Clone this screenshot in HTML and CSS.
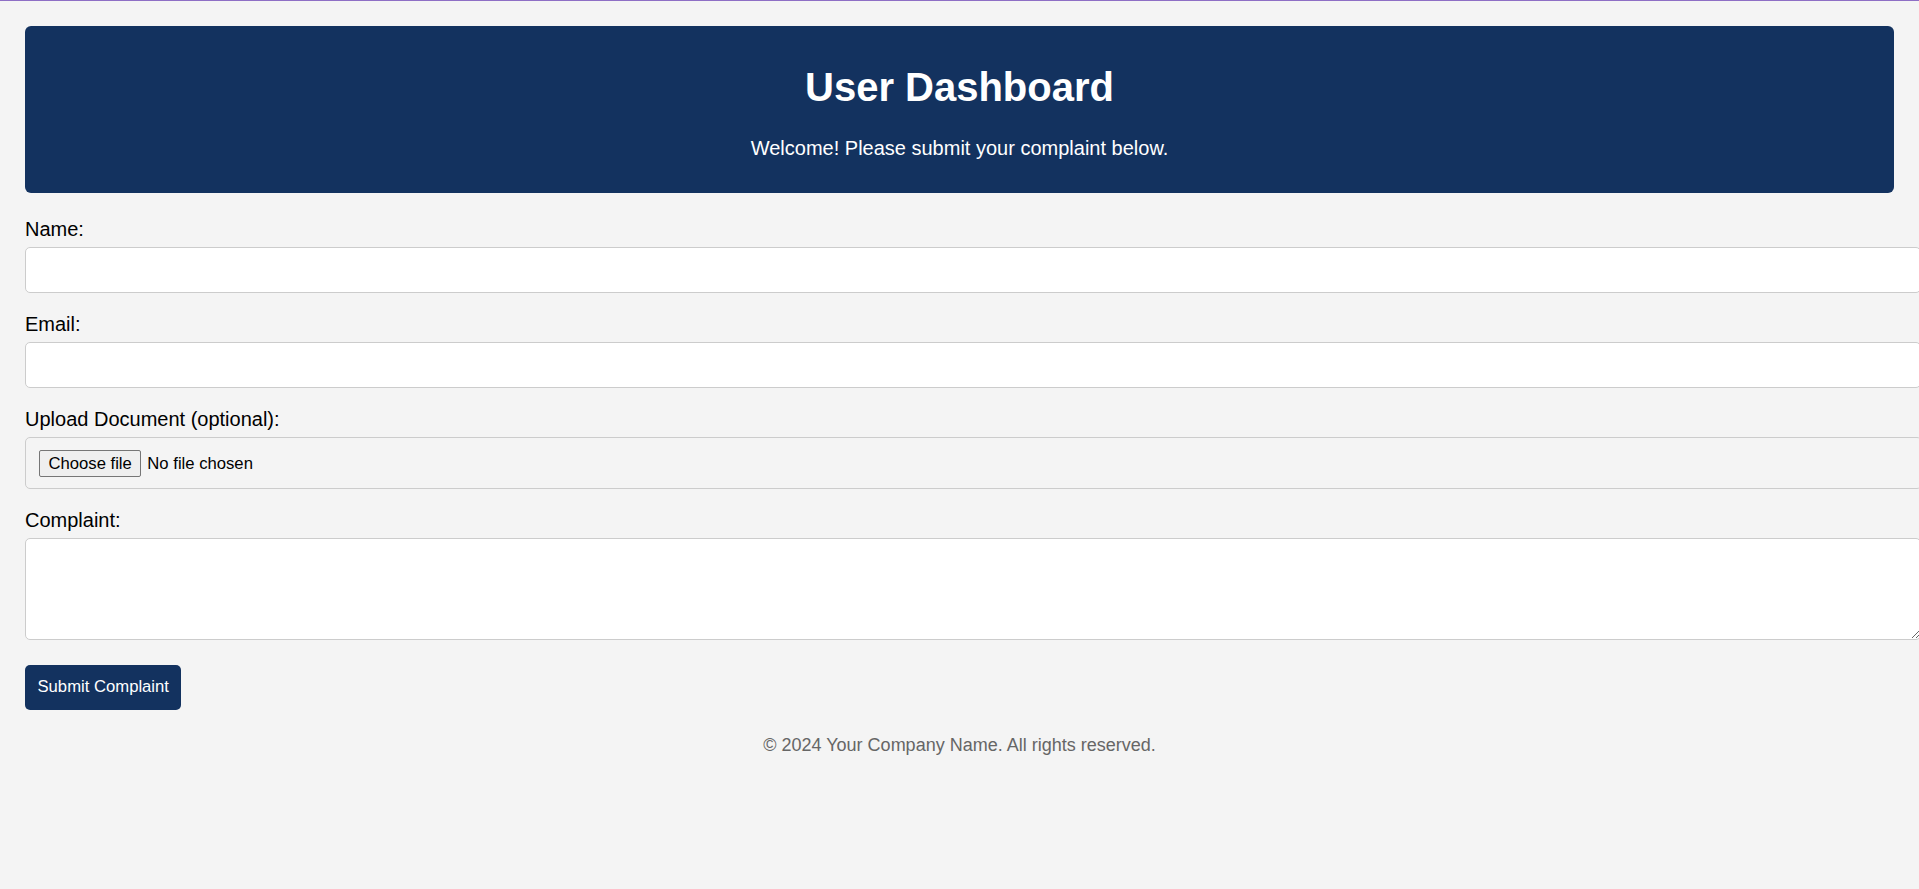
FILE: index.html
```html
<!DOCTYPE html>
<html lang="en">
<head>
<meta charset="UTF-8">
<title>User Dashboard</title>
<link rel="stylesheet" href="styles.css">
</head>
<body>
<header class="banner">
  <h1 class="banner-title">User Dashboard</h1>
  <p class="banner-text">Welcome! Please submit your complaint below.</p>
</header>
<form class="complaint-form">
  <label class="field-label" for="name">Name:</label>
  <input class="field-input" type="text" id="name" name="name">
  <label class="field-label" for="email">Email:</label>
  <input class="field-input" type="email" id="email" name="email">
  <label class="field-label" for="doc">Upload Document (optional):</label>
  <div class="field-input field-file">
    <label class="file-btn" for="doc">Choose file</label>
    <span class="file-status">No file chosen</span>
    <input class="file-hidden" type="file" id="doc" name="doc">
  </div>
  <label class="field-label" for="complaint">Complaint:</label>
  <textarea class="field-input field-area" id="complaint" name="complaint"></textarea>
  <button class="submit-btn" type="submit">Submit Complaint</button>
</form>
<footer class="page-footer">© 2024 Your Company Name. All rights reserved.</footer>
</body>
</html>
```
FILE: styles.css
```css
html {
  overflow-x: hidden;
}
body {
  margin: 0;
  padding: 25px;
  border-top: 1px solid #8e6fc5;
  background: #f4f4f4;
  font-family: "Liberation Sans", Arial, sans-serif;
  font-size: 20px;
  color: #000;
}
.banner {
  background: #13325f;
  color: #fff;
  text-align: center;
  padding: 12.5px;
  border-radius: 6px;
  margin-bottom: 25px;
}
.banner-title {
  font-size: 40px;
  font-weight: bold;
  margin: 26.8px 0;
}
.banner-text {
  font-size: 20px;
  margin: 20px 0;
}
.complaint-form {
  margin: 0;
}
.field-label {
  display: block;
  margin-bottom: 6.5px;
}
.field-input {
  display: block;
  width: 100%;
  height: 19px;
  padding: 12.5px;
  margin: 0 0 19.5px 0;
  border: 1px solid #ccc;
  border-radius: 5px;
  background: #fff;
  font-family: "Liberation Sans", Arial, sans-serif;
  font-size: 16.67px;
}
.field-file {
  display: flex;
  align-items: center;
  height: 27px;
  padding: 11.5px 12.5px 11.5px 13px;
  background: transparent;
  color: #000;
}
.file-btn {
  display: block;
  box-sizing: border-box;
  height: 27px;
  padding: 3px 8.5px 0;
  margin-right: 6px;
  line-height: 19px;
  background: #efefef;
  border: 1px solid #767676;
  border-radius: 2px;
  color: #000;
  font-size: 16.67px;
  cursor: default;
}
.file-status {
  font-size: 16.67px;
  line-height: 19px;
}
.file-hidden {
  display: none;
}
.field-area {
  height: 75px;
  margin-bottom: 24.5px;
  resize: both;
}
.submit-btn {
  display: block;
  background: #13325f;
  color: #fff;
  border: none;
  border-radius: 5px;
  padding: 12.5px;
  font-family: "Liberation Sans", Arial, sans-serif;
  font-size: 16.67px;
  line-height: 20px;
}
.page-footer {
  margin-top: 25px;
  text-align: center;
  color: #666;
  font-size: 18px;
}
```
